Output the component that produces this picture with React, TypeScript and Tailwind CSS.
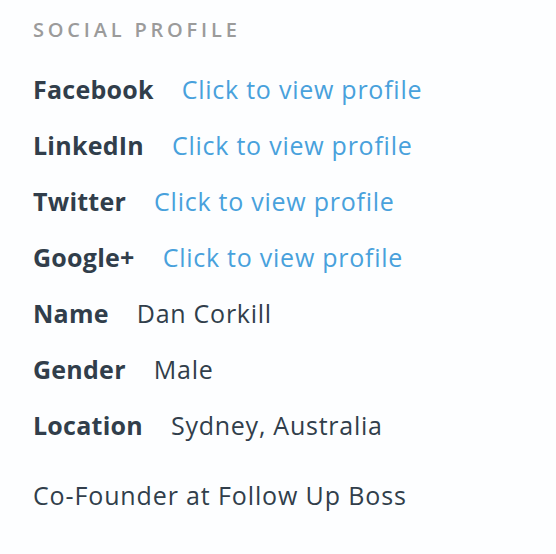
const rows: { label: string; value: string; link?: boolean }[] = [
  { label: "Facebook", value: "Click to view profile", link: true },
  { label: "LinkedIn", value: "Click to view profile", link: true },
  { label: "Twitter", value: "Click to view profile", link: true },
  { label: "Google+", value: "Click to view profile", link: true },
  { label: "Name", value: "Dan Corkill" },
  { label: "Gender", value: "Male" },
  { label: "Location", value: "Sydney, Australia" },
];

export default function App() {
  return (
    <div className="min-h-[554px] w-[556px] bg-[#fdfeff] pl-[33px] font-['Open_Sans',sans-serif] text-[#313e4b]">
      <div className="flex h-[61px] items-center pb-[1px]">
        <h3 className="text-[20px] leading-none font-semibold uppercase tracking-[0.19em] text-[#9b9b9b]">
          Social Profile
        </h3>
      </div>
      <div className="flex flex-col">
        {rows.map((r) => (
          <div
            key={r.label}
            className="flex h-[56px] items-center text-[25px] leading-none tracking-[0.03em]"
          >
            <span className="font-bold tracking-[0.01em]">{r.label}</span>
            <span
              className={
                "ml-[28px] " + (r.link ? "cursor-pointer text-[#48a1dc]" : "text-[#313e4b]")
              }
            >
              {r.value}
            </span>
          </div>
        ))}
      </div>
      <p className="mt-[14px] flex h-[56px] items-center text-[25px] leading-none tracking-[0.035em]">
        Co-Founder at Follow Up Boss
      </p>
    </div>
  );
}
